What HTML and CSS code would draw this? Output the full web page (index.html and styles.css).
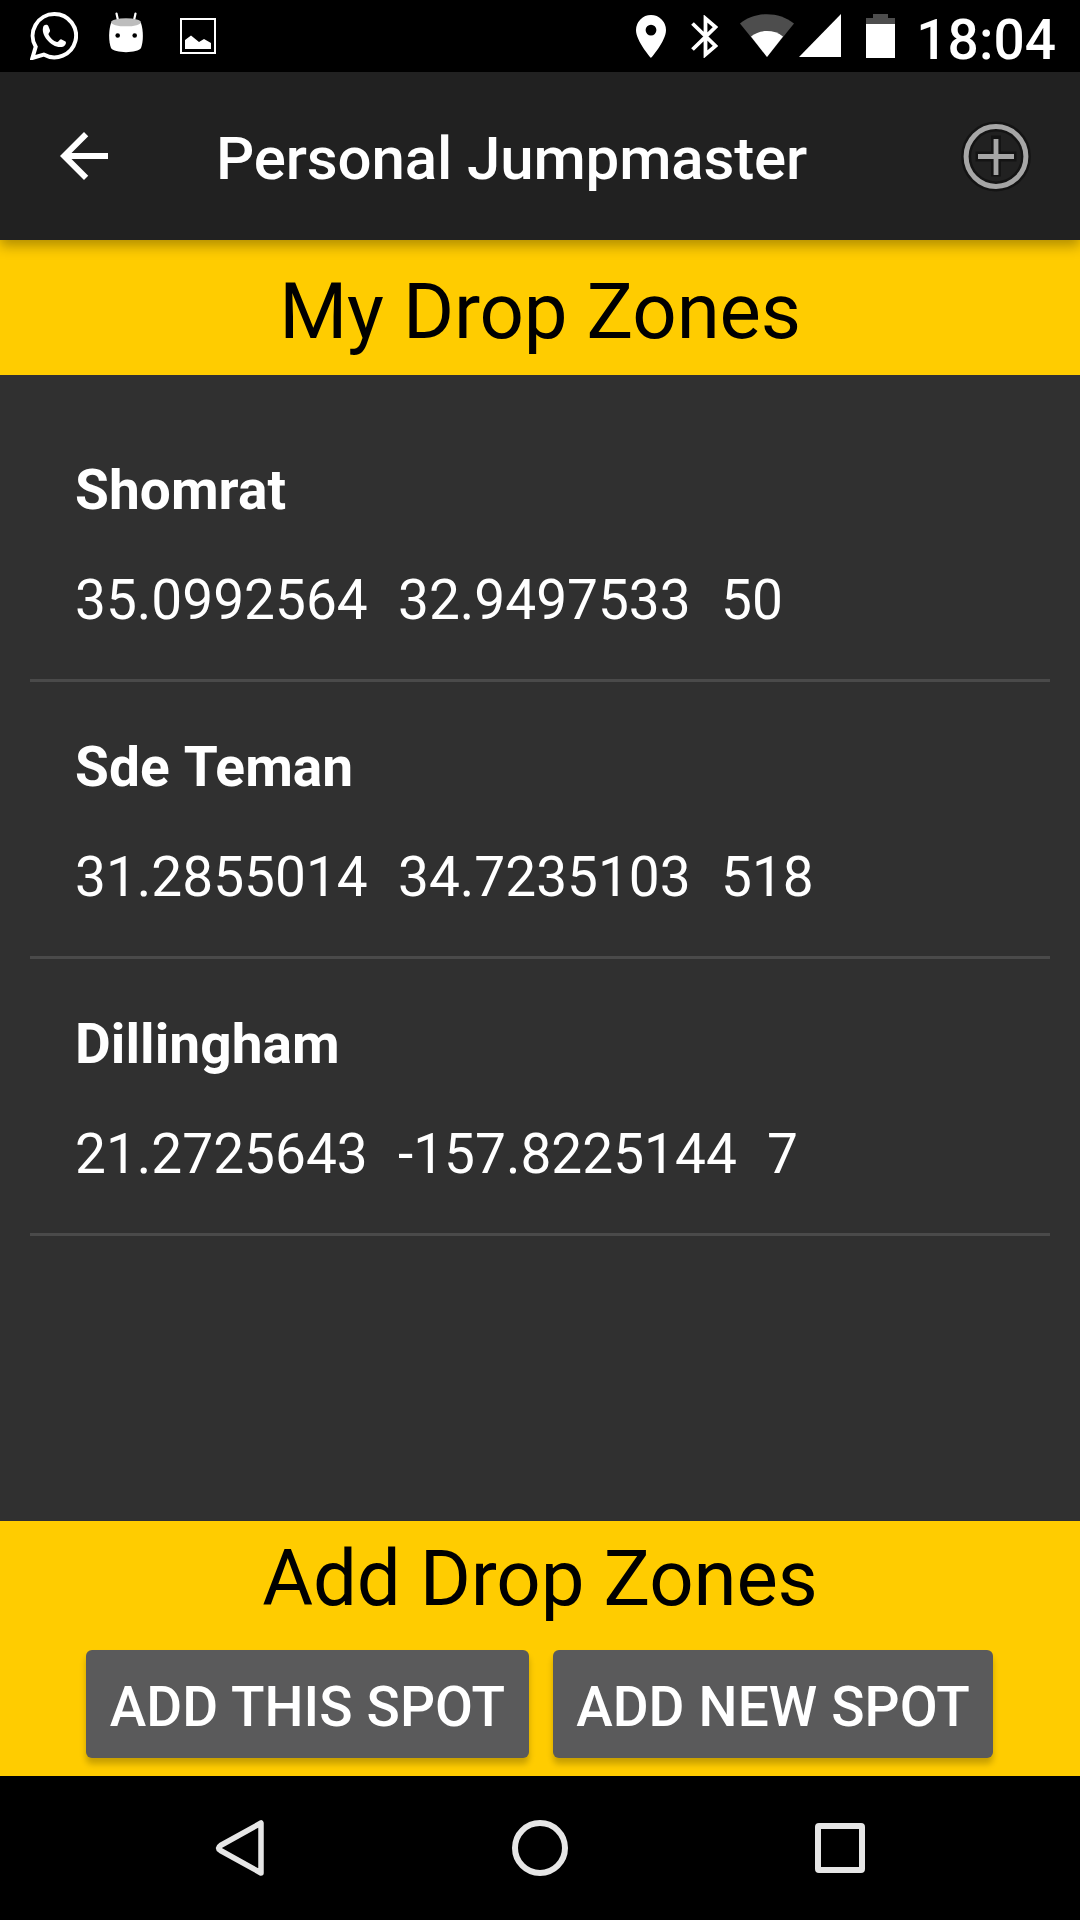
FILE: index.html
```html
<!DOCTYPE html>
<html lang="en">
<head>
<meta charset="utf-8">
<title>Personal Jumpmaster</title>
<link rel="stylesheet" href="styles.css">
</head>
<body>
<div class="screen">
  <div class="status-bar">
    <div class="notifications">
      <svg class="icon-chat" viewBox="0 0 48 48" width="48" height="48"><path d="M24.500 2a21.700 21.700 0 1 1-10.800 40.600L2.400 46l3.300-11.200A21.700 21.700 0 0 1 24.500 2z" fill="none" stroke="#fff" stroke-width="4"/><path d="M13.500 14c1.400-1.500 4-1.700 4.800 0l1.700 4.200c.5 1.600-1.800 3-1.500 4.200 1.700 3.600 4.800 6.400 8.400 7.600 1.600.3 2.600-3.100 4.200-2.800l4.400 2.300c1.200 1.300-.2 4.100-2 5-9.400 3.800-24.100-10.700-20-20.500z" fill="#fff"/></svg>
      <svg class="icon-droid" viewBox="0 0 34 42" width="34" height="42"><path d="M7.500 1.500l2 9M26.500 1.500l-2 9" stroke="#fff" stroke-width="2.200" stroke-linecap="round"/><path d="M2 11h30c2.500 8 2.500 18 0 25-3 5.500-27 5.500-30 0-2.500-7-2.500-17 0-25z" fill="#fff"/><ellipse cx="17" cy="10.300" rx="15" ry="4" fill="#bdbdbd"/><circle cx="8.700" cy="23.500" r="2.300"/><circle cx="25.700" cy="23.500" r="2.300"/></svg>
      <svg class="icon-photo" viewBox="0 0 36 36" width="36" height="36"><rect x="1" y="1" width="34" height="34" fill="none" stroke="#fff" stroke-width="2"/><path d="M5 31V22l6-4.500 8 6.500 5-3 7 4v6z" fill="#fff"/></svg>
    </div>
    <div class="system">
      <svg class="icon-pin" viewBox="0 0 30 43" width="30" height="43"><path fill="#fff" fill-rule="evenodd" d="M15 0A15 15 0 0 0 0 15c0 11.200 15 28 15 28s15-16.800 15-28A15 15 0 0 0 15 0zm0 9.700a5.400 5.400 0 1 1 0 10.800 5.400 5.400 0 0 1 0-10.800z"/></svg>
      <svg class="icon-bt" viewBox="0 0 27 43" width="27" height="43"><path d="M1.500 8.500L24.500 31 14.500 39.500V3.500L24.500 12 1.500 34.500" fill="none" stroke="#fff" stroke-width="3.800"/></svg>
      <svg class="icon-wifi" viewBox="0 0 54 43" width="54" height="43"><path d="M27 43L0 9.500C15-3 39-3 54 9.500z" fill="#4d4d4d"/><path d="M27 43L11 22.500C20 15.300 34 15.300 43 22.500z" fill="#fff"/></svg>
      <svg class="icon-signal" viewBox="0 0 42 43" width="42" height="43"><path d="M42 0v43H0z" fill="#fff"/></svg>
      <svg class="icon-battery" viewBox="0 0 29 44" width="29" height="44"><path d="M0 4h7V0h15v4h7v7H0z" fill="#4d4d4d"/><path d="M0 10h29v34H0z" fill="#fff"/></svg>
      <span class="clock">18:04</span>
    </div>
  </div>

  <header class="toolbar">
    <svg class="back" viewBox="0 0 24 24" width="72" height="72"><path fill="#fff" d="M20 11H7.830l5.590-5.590L12 4l-8 8 8 8 1.410-1.410L7.830 13H20z"/></svg>
    <h1 class="title">Personal Jumpmaster</h1>
    <svg class="add" viewBox="0 0 72 72" width="72" height="72" fill="none"><g stroke="#141414" stroke-width="10"><circle cx="36" cy="36.500" r="29.900"/><path stroke-linejoin="round" d="M15.500 36.500h41M36 15.500v41"/></g><g stroke="#a6a6a6"><circle cx="36" cy="36.500" r="29.900" stroke-width="5"/><path stroke-width="4.800" d="M18 36.500h36M36 19v36"/></g></svg>
  </header>

  <h2 class="banner">My Drop Zones</h2>

  <main class="zones">
    <div class="zone"><div class="name">Shomrat</div><div class="coords">35.0992564  32.9497533  50</div></div>
    <div class="zone"><div class="name">Sde Teman</div><div class="coords">31.2855014  34.7235103  518</div></div>
    <div class="zone"><div class="name">Dillingham</div><div class="coords">21.2725643  -157.8225144  7</div></div>
  </main>

  <section class="add-panel">
    <h2 class="panel-title">Add Drop Zones</h2>
    <div class="buttons">
      <button class="btn btn-this">ADD THIS SPOT</button>
      <button class="btn btn-new">ADD NEW SPOT</button>
    </div>
  </section>

  <nav class="nav-bar">
    <svg viewBox="0 0 60 60" width="60" height="60"><path d="M51 5v50L10.500 32.500Q6.500 30 10.500 27.500z" fill="none" stroke="#e6e6e6" stroke-width="5.500" stroke-linejoin="round"/></svg>
    <svg viewBox="0 0 60 60" width="60" height="60"><circle cx="30" cy="30" r="25" fill="none" stroke="#e6e6e6" stroke-width="6"/></svg>
    <svg viewBox="0 0 60 60" width="60" height="60"><rect x="8" y="8" width="44" height="44" rx="1" fill="none" stroke="#e6e6e6" stroke-width="6"/></svg>
  </nav>
</div>
</body>
</html>
```
FILE: styles.css
```css
* { box-sizing: border-box; }
body { margin: 0; background: #303030; font-family: Roboto, "Liberation Sans", sans-serif; }
h1, h2 { margin: 0; }
svg { display: block; flex: none; }

.screen { width: 1080px; height: 1920px; display: flex; flex-direction: column; background: #303030; color: #fff; }

.status-bar { height: 72px; background: #000; display: flex; justify-content: space-between; }
.notifications, .system { display: flex; align-items: flex-start; }
.notifications { padding-left: 30px; }
.icon-chat { margin-top: 12px; }
.icon-droid { margin: 12px 0 0 31px; }
.icon-photo { margin: 18px 0 0 37px; }
.system { width: 444px; }
.icon-pin { margin: 15px 0 0 0.400px; }
.icon-bt { margin: 15px 0 0 24.600px; }
.icon-wifi { margin: 14px 0 0 22.400px; }
.icon-signal { margin: 14px 0 0 4.600px; }
.icon-battery { margin: 14px 0 0 25px; }
.clock { margin: 4px 0 0 21.400px; font-size: 55px; line-height: 72px; font-weight: 500; white-space: nowrap; }

.toolbar { position: relative; z-index: 1; height: 168px; padding: 0 48px; display: flex; align-items: center; background: #212121; box-shadow: 0 6px 12px rgba(0, 0, 0, 0.300); }
.title { flex: 1; margin-left: 96px; padding-top: 6px; font-size: 60px; line-height: 70px; font-weight: 500; letter-spacing: -0.130px; white-space: nowrap; }

.banner { height: 135px; padding-top: 26px; background: #ffcc00; color: #000; font-size: 78px; line-height: 92px; font-weight: 400; letter-spacing: -0.170px; text-align: center; }

.zones { flex: 1; padding: 30px 30px 0; }
.zone { height: 277px; padding: 53px 45px 0; border-bottom: 3px solid #4a4a4a; }
.name { font-size: 55px; line-height: 64px; font-weight: 700; letter-spacing: 0.060px; word-spacing: 1.700px; }
.coords { margin-top: 46px; font-size: 55px; line-height: 64px; word-spacing: 1.500px; white-space: pre; }

.add-panel { height: 255px; background: #ffcc00; }
.panel-title { padding-top: 12px; color: #000; font-size: 78px; line-height: 92px; font-weight: 400; letter-spacing: -0.170px; text-align: center; }
.buttons { display: flex; gap: 24px; padding: 25px 0 0 86px; }
.btn { height: 108px; padding: 6px 0 0; border: 0; border-radius: 6px; background: #5a5a5b; color: #fff; font: 500 55px/64px Roboto, "Liberation Sans", sans-serif; word-spacing: 0.500px; white-space: nowrap; box-shadow: 0 6px 6px rgba(0, 0, 0, 0.220); }
.btn-this { width: 443px; }
.btn-new { width: 440px; }

.nav-bar { height: 144px; padding: 0 210px; display: flex; align-items: center; justify-content: space-between; background: #000; }
```
